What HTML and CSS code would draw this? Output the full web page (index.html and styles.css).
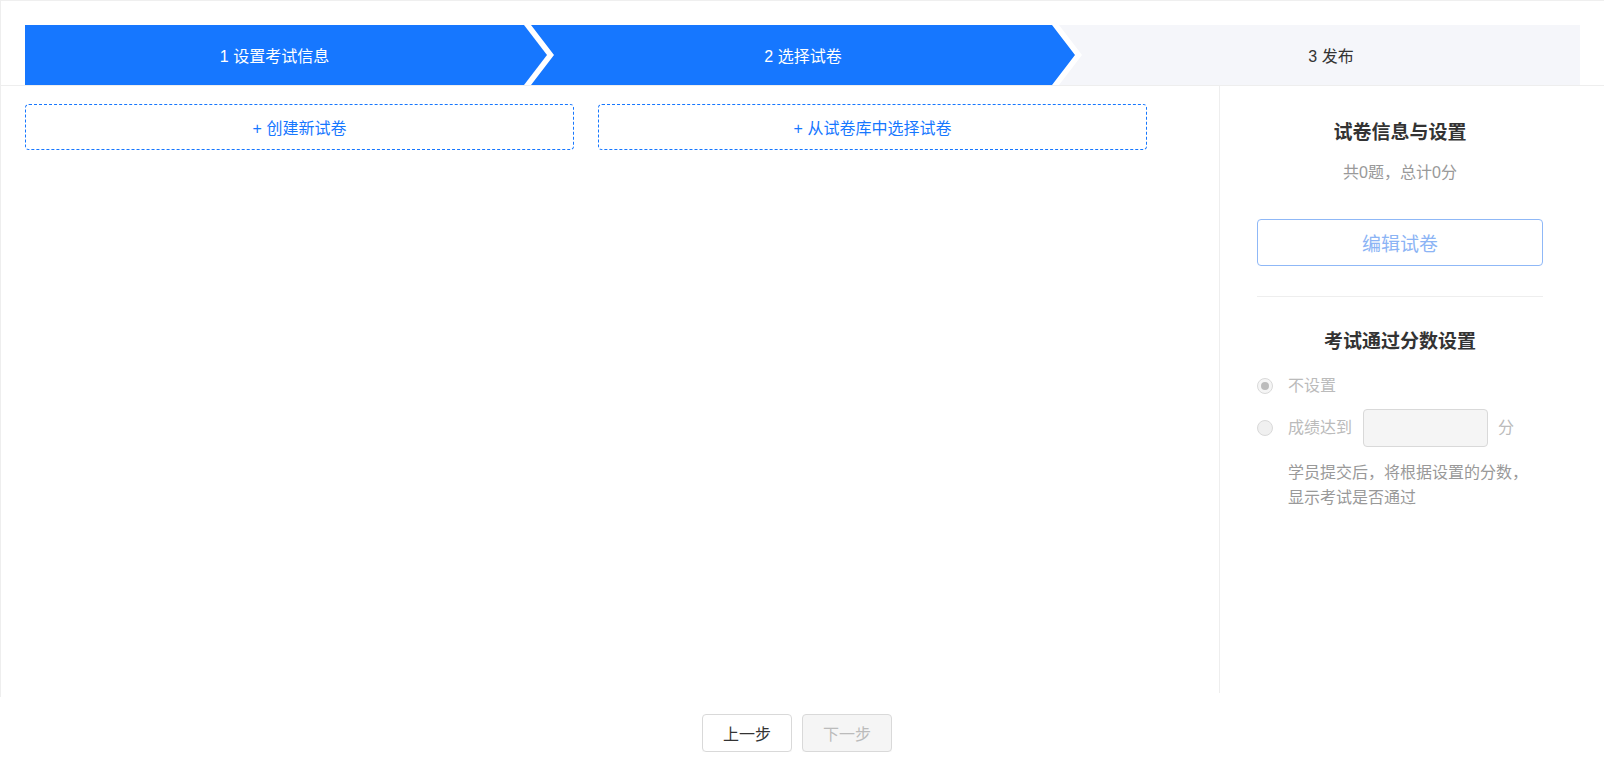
FILE: index.html
```html
<!DOCTYPE html>
<html lang="zh-CN">
<head>
    <meta charset="UTF-8">
    <meta name="viewport" content="width=device-width, initial-scale=1.0">
    <title>选择试卷</title>
    <link rel="stylesheet" href="styles.css">
</head>
<body>
    <div class="exam-panel">
        <div class="steps">
            <div class="step step-first done">1 设置考试信息</div>
            <div class="step step-middle done">2 选择试卷</div>
            <div class="step step-last">3 发布</div>
        </div>

        <div class="exam-body">
            <div class="paper-area">
                <button class="dashed-button">+ 创建新试卷</button>
                <button class="dashed-button">+ 从试卷库中选择试卷</button>
            </div>

            <div class="side">
                <div class="side-title">试卷信息与设置</div>
                <div class="side-sub">共0题，总计0分</div>
                <button class="edit-button" disabled>编辑试卷</button>
                <div class="divider"></div>

                <div class="side-title score-title">考试通过分数设置</div>
                <label class="radio-row first-row">
                    <span class="radio checked"></span>
                    <span>不设置</span>
                </label>
                <label class="radio-row">
                    <span class="radio"></span>
                    <span>成绩达到</span>
                    <input type="text" class="score-input" disabled>
                    <span class="unit">分</span>
                </label>
                <p class="hint">学员提交后，将根据设置的分数，显示考试是否通过</p>
            </div>
        </div>
    </div>

    <div class="footer">
        <button class="plain-button">上一步</button>
        <button class="plain-button" disabled>下一步</button>
    </div>
</body>
</html>
```

FILE: styles.css
```css
body {
    margin: 0;
    font-family: "Liberation Sans", "Noto Sans CJK SC", sans-serif;
    font-size: 16px;
    color: #333;
    background-color: #fff;
}

button {
    font-family: inherit;
}

.exam-panel {
    height: 697px;
    box-sizing: border-box;
    border-top: 1px solid #efefef;
    border-left: 1px solid #eee;
    padding: 24px 24px 4px 24px;
    display: flex;
    flex-direction: column;
}

/* step bar with arrow shaped items */
.steps {
    display: flex;
    height: 60px;
    flex-shrink: 0;
}

.step {
    display: flex;
    align-items: center;
    justify-content: center;
    background-color: #f5f6fa;
    color: #333;
    font-size: 16px;
}

.step.done {
    background-color: #1677ff;
    color: #fff;
}

.step-first {
    flex: 0 0 522px;
    padding-right: 23px;
    box-sizing: border-box;
    clip-path: polygon(0 0, calc(100% - 23px) 0, 100% 50%, calc(100% - 23px) 100%, 0 100%);
}

.step-middle {
    flex: 0 0 544px;
    margin-left: -16px;
    clip-path: polygon(0 0, calc(100% - 23px) 0, 100% 50%, calc(100% - 23px) 100%, 0 100%, 23px 50%);
}

.step-last {
    flex: 1;
    margin-left: -16px;
    padding-left: 23px;
    clip-path: polygon(0 0, 100% 0, 100% 100%, 0 100%, 23px 50%);
}

.exam-body {
    flex: 1;
    display: flex;
    border-top: 1px solid #eee;
    margin-right: -24px;
    margin-left: -24px;
}

.paper-area {
    flex: 1;
    display: grid;
    grid-template-columns: 1fr 1fr;
    column-gap: 24px;
    align-content: start;
    padding: 18px 72px 0 24px;
}

.dashed-button {
    height: 46px;
    background-color: #fff;
    border: 1px dashed #1677ff;
    border-radius: 4px;
    color: #1677ff;
    font-size: 16px;
    cursor: pointer;
}

.side {
    width: 361px;
    box-sizing: border-box;
    flex-shrink: 0;
    border-left: 1px solid #eee;
    padding: 34px 37px 0 37px;
    margin-right: 24px;
}

.side-title {
    text-align: center;
    font-size: 19px;
    font-weight: bold;
    line-height: 26px;
    color: #333;
}

.side-sub {
    margin-top: 15px;
    text-align: center;
    line-height: 24px;
    color: #999;
}

.edit-button {
    display: block;
    width: 100%;
    height: 47px;
    margin-top: 34px;
    background-color: #fff;
    border: 1px solid #8fb8f7;
    border-radius: 4px;
    color: #8cb4f5;
    font-size: 19px;
}

.divider {
    height: 1px;
    margin-top: 30px;
    background-color: #eee;
}

.score-title {
    margin-top: 32px;
}

.radio-row {
    display: flex;
    align-items: center;
    margin-top: 11px;
    color: #bbb;
    line-height: 24px;
}

.radio-row.first-row {
    margin-top: 19px;
}

.radio {
    width: 16px;
    height: 16px;
    box-sizing: border-box;
    border: 1px solid #d9d9d9;
    border-radius: 50%;
    background-color: #f0f0f0;
    margin-right: 15px;
    display: flex;
    align-items: center;
    justify-content: center;
}

.radio.checked {
    background-color: #f5f5f5;
}

.radio.checked::after {
    content: "";
    width: 8px;
    height: 8px;
    border-radius: 50%;
    background-color: #bbb;
}

.score-input {
    width: 125px;
    height: 38px;
    box-sizing: border-box;
    margin-left: 11px;
    border: 1px solid #d9d9d9;
    border-radius: 4px;
    background-color: #f5f5f5;
}

.unit {
    margin-left: 10px;
}

.hint {
    margin: 13px 0 0 31px;
    max-width: 245px;
    line-height: 25px;
    color: #999;
}

.footer {
    display: flex;
    justify-content: center;
    gap: 10px;
    padding: 17px 10px 0 0;
}

.plain-button {
    height: 38px;
    padding: 0 20px;
    background-color: #fff;
    border: 1px solid #d9d9d9;
    border-radius: 4px;
    box-shadow: 0 2px 0 rgba(0, 0, 0, 0.02);
    color: #333;
    font-size: 16px;
    cursor: pointer;
}

.plain-button:disabled {
    background-color: #f5f5f5;
    color: #bbb;
    cursor: not-allowed;
}
```
